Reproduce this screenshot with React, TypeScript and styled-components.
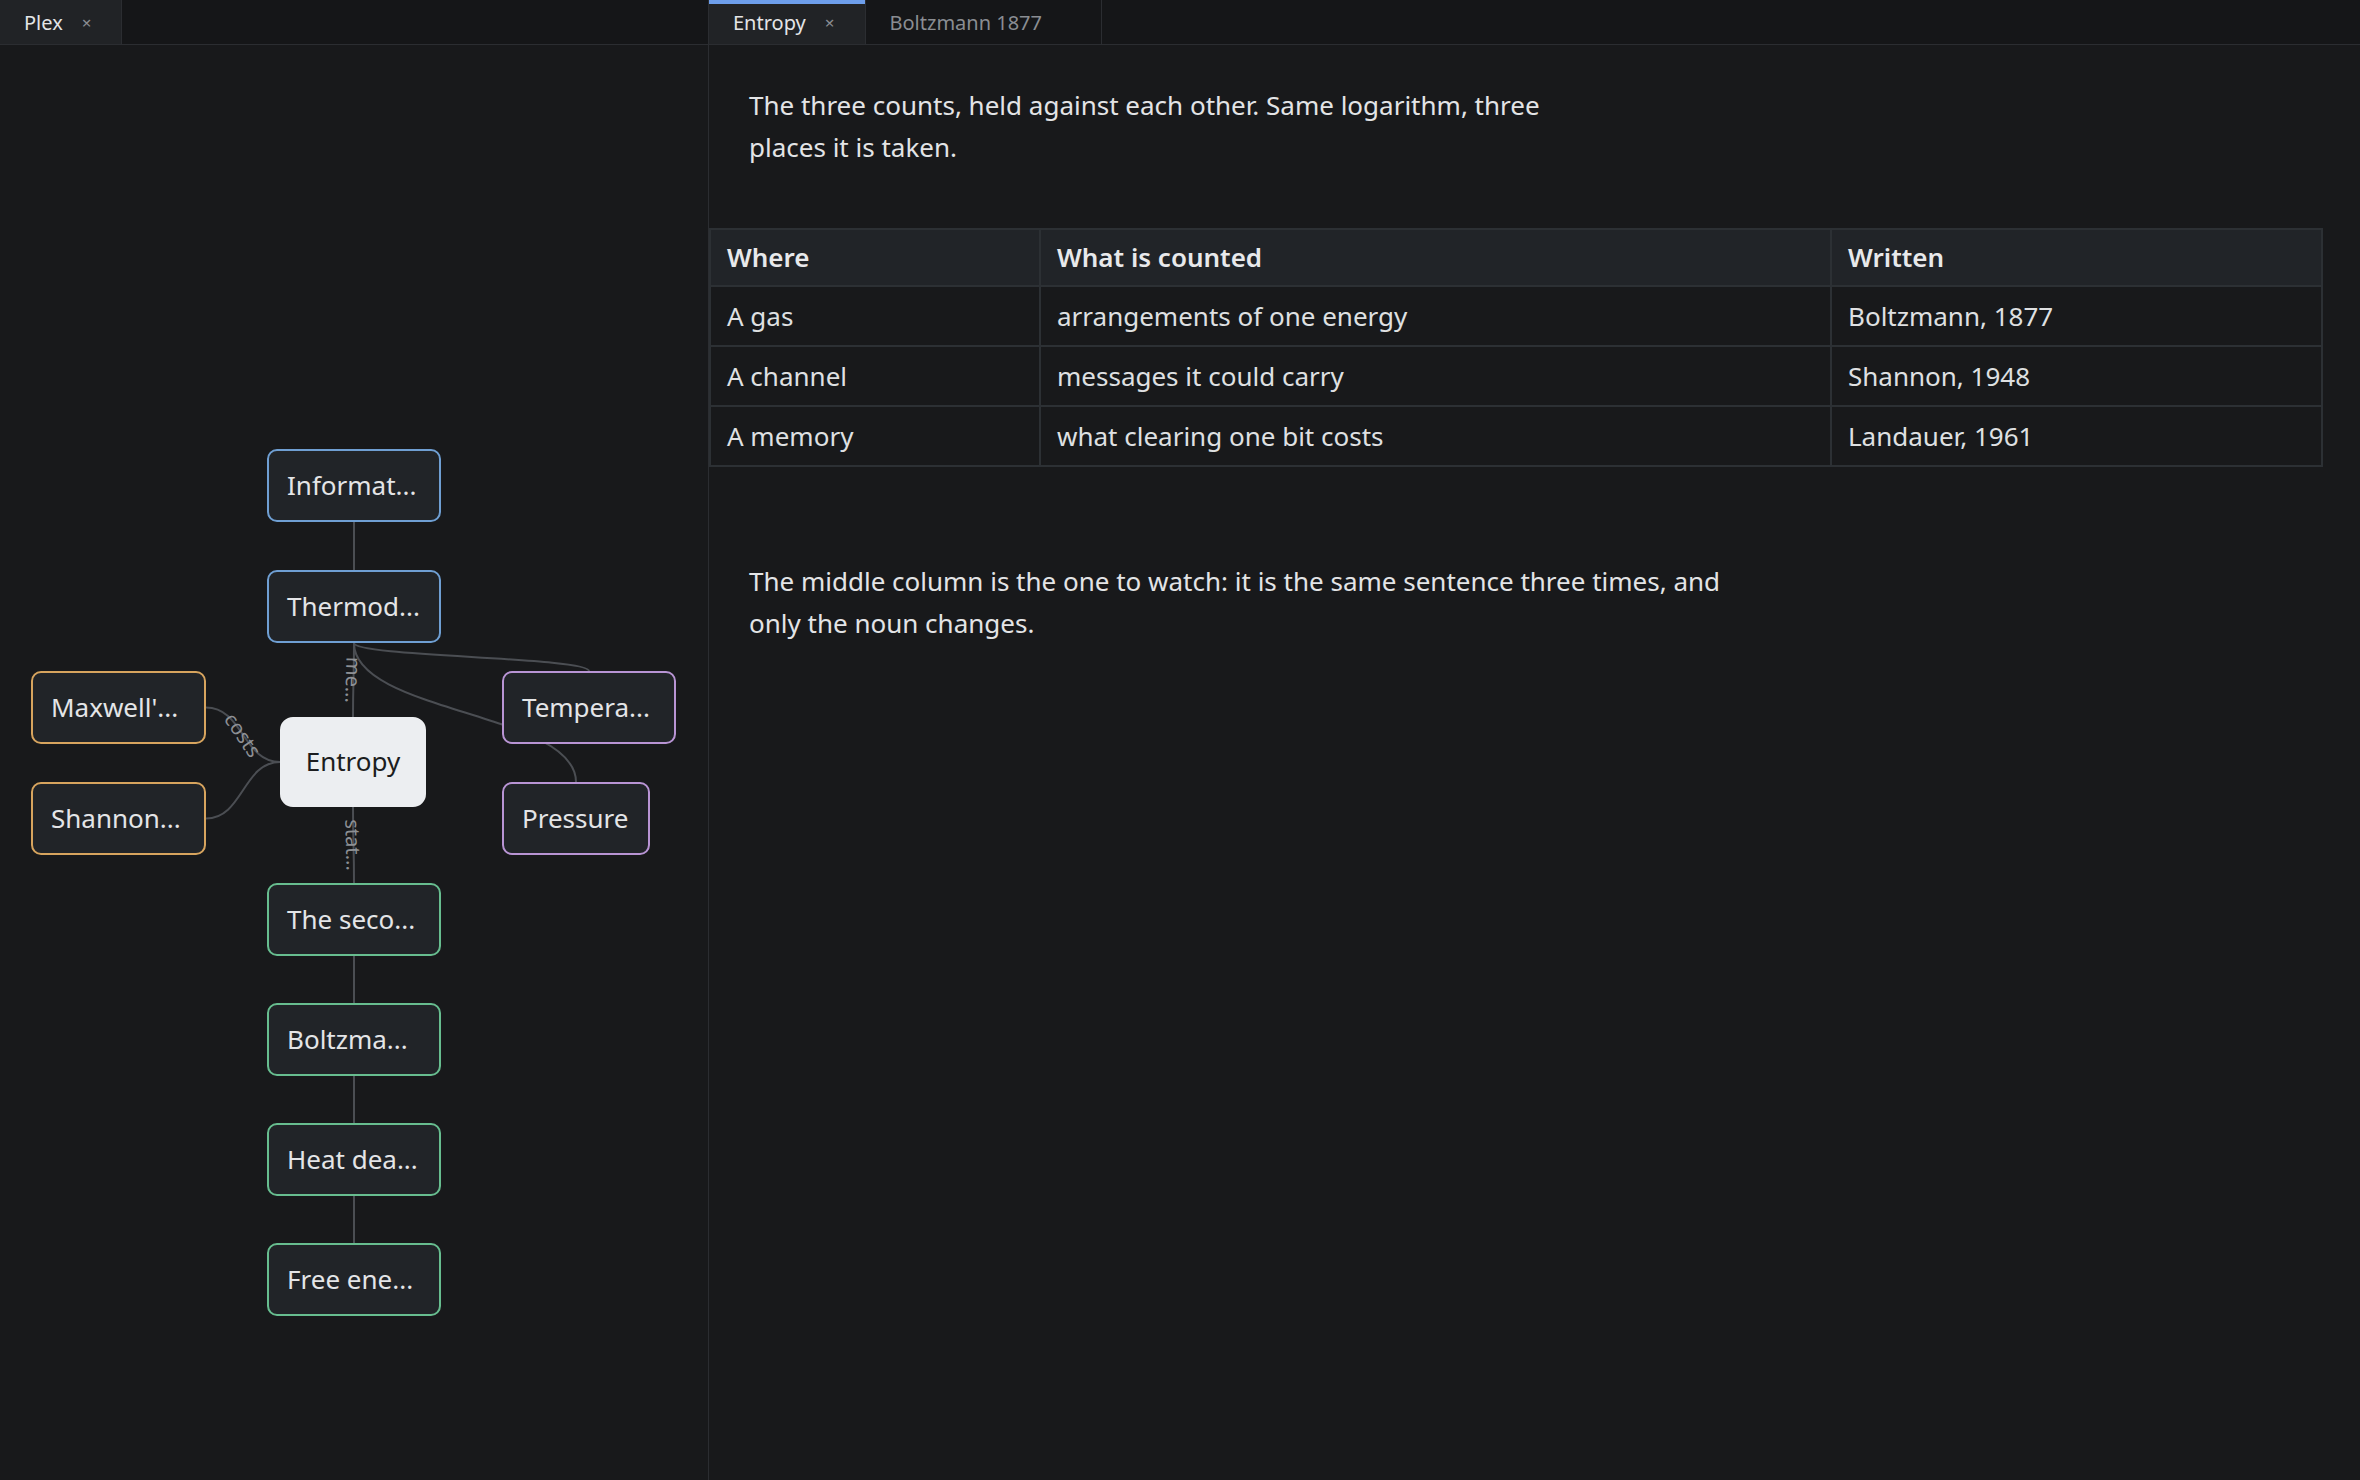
import React from "react";
import styled, { createGlobalStyle } from "styled-components";

const GlobalStyle = createGlobalStyle`
  html, body {
    margin: 0;
    padding: 0;
    background: #18191b;
  }
  body {
    font-family: "Noto Sans", "Open Sans", sans-serif;
    color: #e3e4e6;
  }
`;

const Shell = styled.div`
  display: grid;
  grid-template-columns: 709px 1fr;
  height: 1480px;
  overflow: hidden;
`;

const Pane = styled.section<{ $divider?: boolean }>`
  display: flex;
  flex-direction: column;
  min-width: 0;
  border-right: ${(p) => (p.$divider ? "1px solid #2b2d31" : "none")};
`;

const TabBar = styled.div`
  display: flex;
  height: 44px;
  flex-shrink: 0;
  background: #151618;
  border-bottom: 1px solid #2b2d31;
`;

const Tab = styled.div<{ $active?: boolean; $accent?: boolean }>`
  position: relative;
  display: flex;
  align-items: center;
  gap: 19px;
  padding: 0 30px 0 24px;
  font-size: 20px;
  color: ${(p) => (p.$active ? "#e4e5e7" : "#8a8d92")};
  background: ${(p) => (p.$active ? "#212326" : "transparent")};
  border-right: 1px solid #2b2d31;

  &::before {
    content: "";
    display: ${(p) => (p.$accent ? "block" : "none")};
    position: absolute;
    left: 0;
    right: 0;
    top: 0;
    height: 4px;
    background: #6d9eeb;
  }
`;

const Close = styled.span<{ $hidden?: boolean }>`
  font-size: 17px;
  color: #8a8d92;
  visibility: ${(p) => (p.$hidden ? "hidden" : "visible")};
`;

const Canvas = styled.div`
  position: relative;
  flex: 1;
  overflow: hidden;
`;

const Edges = styled.svg`
  position: absolute;
  inset: 0;
`;

type Tone = "blue" | "orange" | "purple" | "green" | "focus";

const borders: Record<Tone, string> = {
  blue: "#6f9fd3",
  orange: "#d7a45e",
  purple: "#b894d4",
  green: "#67bd8f",
  focus: "#eceef1",
};

const Node = styled.div<{ $tone: Tone }>`
  position: absolute;
  box-sizing: border-box;
  display: flex;
  align-items: center;
  justify-content: ${(p) => (p.$tone === "focus" ? "center" : "flex-start")};
  padding: 0 18px 2px;
  font-size: 26px;
  white-space: nowrap;
  border: 2px solid ${(p) => borders[p.$tone]};
  border-radius: ${(p) => (p.$tone === "focus" ? "13px" : "10px")};
  background: ${(p) => (p.$tone === "focus" ? "#eceef1" : "#212428")};
  color: ${(p) => (p.$tone === "focus" ? "#1c1d20" : "#e4e5e7")};
`;

const Article = styled.div`
  flex: 1;
  padding: 39px 37px 0 0;
  overflow: hidden;
`;

const Para = styled.p<{ $max: number; $top?: number }>`
  margin: ${(p) => p.$top ?? 0}px 0 0 40px;
  max-width: ${(p) => p.$max}px;
  font-size: 26px;
  line-height: 42px;
  color: #e3e4e6;
`;

const Table = styled.table`
  margin-top: 60px;
  width: 100%;
  table-layout: fixed;
  border-collapse: collapse;
  font-size: 26px;
  line-height: 42px;
`;

const Th = styled.th`
  text-align: left;
  font-weight: 600;
  padding: 6px 16px 7px;
  background: #212428;
  color: #e8e9eb;
  border: 2px solid #2c3034;
`;

const Td = styled.td`
  padding: 8px 16px;
  color: #dfe0e2;
  border: 2px solid #2c3034;
`;

type N = { id: string; label: string; tone: Tone; x: number; y: number; w: number; h: number };

const nodes: N[] = [
  { id: "info", label: "Informat...", tone: "blue", x: 267, y: 404, w: 174, h: 73 },
  { id: "thermo", label: "Thermod...", tone: "blue", x: 267, y: 525, w: 174, h: 73 },
  { id: "maxwell", label: "Maxwell'...", tone: "orange", x: 31, y: 626, w: 175, h: 73 },
  { id: "shannon", label: "Shannon...", tone: "orange", x: 31, y: 737, w: 175, h: 73 },
  { id: "entropy", label: "Entropy", tone: "focus", x: 280, y: 672, w: 146, h: 90 },
  { id: "temp", label: "Tempera...", tone: "purple", x: 502, y: 626, w: 174, h: 73 },
  { id: "pressure", label: "Pressure", tone: "purple", x: 502, y: 737, w: 148, h: 73 },
  { id: "second", label: "The seco...", tone: "green", x: 267, y: 838, w: 174, h: 73 },
  { id: "boltz", label: "Boltzma...", tone: "green", x: 267, y: 958, w: 174, h: 73 },
  { id: "heat", label: "Heat dea...", tone: "green", x: 267, y: 1078, w: 174, h: 73 },
  { id: "free", label: "Free ene...", tone: "green", x: 267, y: 1198, w: 174, h: 73 },
];

const byId = (id: string) => nodes.find((n) => n.id === id)!;

type E = { from: string; to: string; side: "v" | "h"; label?: string };

const edges: E[] = [
  { from: "info", to: "thermo", side: "v" },
  { from: "thermo", to: "entropy", side: "v", label: "me..." },
  { from: "thermo", to: "temp", side: "v" },
  { from: "thermo", to: "pressure", side: "v" },
  { from: "maxwell", to: "entropy", side: "h", label: "costs" },
  { from: "shannon", to: "entropy", side: "h" },
  { from: "entropy", to: "second", side: "v", label: "stat..." },
  { from: "second", to: "boltz", side: "v" },
  { from: "boltz", to: "heat", side: "v" },
  { from: "heat", to: "free", side: "v" },
];

// bezier between handles, like a flow diagram: bottom->top or right->left
const route = (e: E) => {
  const a = byId(e.from);
  const b = byId(e.to);
  let sx: number, sy: number, tx: number, ty: number;
  let c1: [number, number], c2: [number, number];
  if (e.side === "v") {
    sx = a.x + a.w / 2;
    sy = a.y + a.h;
    tx = b.x + b.w / 2;
    ty = b.y;
    const k = (ty - sy) / 2;
    c1 = [sx, sy + k];
    c2 = [tx, ty - k];
  } else {
    sx = a.x + a.w;
    sy = a.y + a.h / 2;
    tx = b.x;
    ty = b.y + b.h / 2;
    const k = (tx - sx) / 2;
    c1 = [sx + k, sy];
    c2 = [tx - k, ty];
  }
  const d = `M${sx},${sy} C${c1[0]},${c1[1]} ${c2[0]},${c2[1]} ${tx},${ty}`;
  // tangent at t = .5
  const dx = 0.75 * (c1[0] - sx) + 1.5 * (c2[0] - c1[0]) + 0.75 * (tx - c2[0]);
  const dy = 0.75 * (c1[1] - sy) + 1.5 * (c2[1] - c1[1]) + 0.75 * (ty - c2[1]);
  const mx = 0.125 * sx + 0.375 * c1[0] + 0.375 * c2[0] + 0.125 * tx;
  const my = 0.125 * sy + 0.375 * c1[1] + 0.375 * c2[1] + 0.125 * ty;
  const angle = (Math.atan2(dy, dx) * 180) / Math.PI;
  return { d, mx, my, angle };
};

const rows = [
  ["A gas", "arrangements of one energy", "Boltzmann, 1877"],
  ["A channel", "messages it could carry", "Shannon, 1948"],
  ["A memory", "what clearing one bit costs", "Landauer, 1961"],
];

const Graph = () => (
  <Canvas>
    <Edges width={708} height={1435}>
      {edges.map((e) => {
        const r = route(e);
        return (
          <g key={e.from + e.to}>
            <path d={r.d} fill="none" stroke="#4b4e53" strokeWidth={2} />
            {e.label && (
              <text
                x={r.mx}
                y={r.my}
                fill="#8d9095"
                fontSize={20}
                fontFamily='"Noto Sans", sans-serif'
                textAnchor="middle"
                dominantBaseline="central"
                transform={`rotate(${r.angle} ${r.mx} ${r.my})`}
              >
                {e.label}
              </text>
            )}
          </g>
        );
      })}
    </Edges>
    {nodes.map((n) => (
      <Node
        key={n.id}
        $tone={n.tone}
        style={{ left: n.x, top: n.y, width: n.w, height: n.h }}
      >
        {n.label}
      </Node>
    ))}
  </Canvas>
);

export default function App() {
  return (
    <>
      <GlobalStyle />
      <Shell>
        <Pane $divider>
          <TabBar>
            <Tab $active>
              Plex <Close>×</Close>
            </Tab>
          </TabBar>
          <Graph />
        </Pane>
        <Pane>
          <TabBar>
            <Tab $active $accent>
              Entropy <Close>×</Close>
            </Tab>
            <Tab>
              Boltzmann 1877 <Close $hidden>×</Close>
            </Tab>
          </TabBar>
          <Article>
            <Para $max={830}>
              The three counts, held against each other. Same logarithm, three places it is taken.
            </Para>
            <Table>
              <colgroup>
                <col style={{ width: 330 }} />
                <col style={{ width: 791 }} />
                <col />
              </colgroup>
              <thead>
                <tr>
                  <Th>Where</Th>
                  <Th>What is counted</Th>
                  <Th>Written</Th>
                </tr>
              </thead>
              <tbody>
                {rows.map((r) => (
                  <tr key={r[0]}>
                    {r.map((c) => (
                      <Td key={c}>{c}</Td>
                    ))}
                  </tr>
                ))}
              </tbody>
            </Table>
            <Para $max={1010} $top={93}>
              The middle column is the one to watch: it is the same sentence three times, and only
              the noun changes.
            </Para>
          </Article>
        </Pane>
      </Shell>
    </>
  );
}
